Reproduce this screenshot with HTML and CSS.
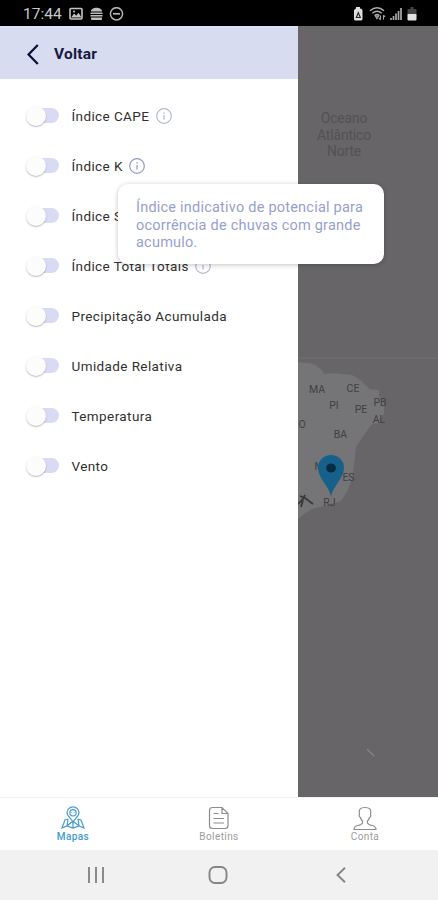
FILE: index.html
```html
<!DOCTYPE html>
<html lang="pt-BR">
<head>
<meta charset="utf-8">
<meta name="viewport" content="width=device-width, initial-scale=1">
<title>Mapas</title>
<link rel="stylesheet" href="styles.css">
</head>
<body>
<div class="phone">
  <header class="status">
    <span class="clock">17:44</span>
    <svg class="status-left" width="56" height="14" viewBox="0 0 56 14" fill="none">
      <rect x="1" y="1.5" width="12" height="10.5" rx="1" stroke="#c4c4c4" stroke-width="1.6"/>
      <path d="M2 10.5l3.2-4 2 2.3 2.3-3 3 4.7z" fill="#c4c4c4"/><circle cx="5" cy="4.5" r="1" fill="#c4c4c4"/>
      <path d="M22 4.500c0-5 11-5 11 0z M21.500 5.500h12v1.500h-12z M21.500 8h12v1.500h-12z M22 10.500h11v1.500q0 1-1 1h-9q-1 0-1-1z" fill="#bdbdbd"/>
      <circle cx="47.500" cy="6.800" r="6.100" stroke="#b4b4b4" stroke-width="1.500"/><path d="M44 6.800h7" stroke="#b4b4b4" stroke-width="1.700"/>
    </svg>
    <svg class="status-right" width="66" height="16" viewBox="0 0 66 16" fill="none">
      <path d="M2.500 4q0-1.500 1.500-1.500V1h4v1.500q2.500 0 2.500 2.500v8q0 1.500-1.500 1.500H3.500Q2 14.500 2 13V4z" fill="#dedede"/>
      <path d="M4.300 11.500l2-4.800 2 4.800z" stroke="#222" stroke-width="1.100"/>
      <path d="M18 4.800q7-6 14 0M20.300 7.300q4.700-4 9.400 0M22.600 9.600q2.400-2 4.800 0" stroke="#aaa" stroke-width="1.500"/>
      <path d="M23.500 10.200h3L25 12.700zM28.500 9.500v4M27 12l1.500 1.800M31.500 13.500v-4M31.500 9l1.500 2" stroke="#aaa" stroke-width="1.100"/>
      <path d="M39 14v-2M41.500 14v-4M44 14V7.500M46.500 14V5M49 14V2" stroke="#aaa" stroke-width="1.700"/>
      <path d="M55.500 8V4q0-1 1-1h2V1h3v2h2q1 0 1 1v4z" fill="#454545"/><path d="M55.500 8h9v5.500q0 1-1 1h-7q-1 0-1-1z" fill="#e2e2e2"/>
    </svg>
  </header>

  <main class="content">
    <section class="drawer">
      <div class="drawer-head">
        <svg width="12" height="21" viewBox="0 0 12 21" fill="none"><path d="M10.800 1L1.500 10.500l9.300 9.500" stroke="#0c1038" stroke-width="2.300"/></svg>
        <h1>Voltar</h1>
      </div>
      <ul class="layers">
        <li><i class="switch"></i><span>Índice CAPE</span><svg class="info faded" viewBox="0 0 16 16"><circle cx="8" cy="8" r="7.300"/><path d="M8 7v4.500M8 4.300v1.500"/></svg></li>
        <li><i class="switch"></i><span>Índice K</span><svg class="info" viewBox="0 0 16 16"><circle cx="8" cy="8" r="7.300"/><path d="M8 7v4.500M8 4.300v1.500"/></svg></li>
        <li><i class="switch"></i><span>Índice S</span></li>
        <li><i class="switch"></i><span>Índice Total Totals</span><svg class="info faded" viewBox="0 0 16 16"><circle cx="8" cy="8" r="7.300"/><path d="M8 7v4.500M8 4.300v1.500"/></svg></li>
        <li><i class="switch"></i><span>Precipitação Acumulada</span></li>
        <li><i class="switch"></i><span>Umidade Relativa</span></li>
        <li><i class="switch"></i><span>Temperatura</span></li>
        <li><i class="switch"></i><span>Vento</span></li>
      </ul>
    </section>

    <section class="map">
      <svg width="140" height="771" viewBox="298 26 140 771">
        <path d="M298 358H438" stroke="#747375"/>
        <path class="land" d="M298 362L306 363Q314 363 318 367L322 370 324 374 331 373 352 375Q359 378 363 383L370 389 379 390 379 396 384 402 384 413 379 423 372 424 366 432 356 447Q355 462 352 479L347 492 341 501 324 506 312 509 304 514 298 519z"/>
        <g class="ocean"><text x="344" y="123">Oceano</text><text x="344" y="139.500">Atlântico</text><text x="344" y="156">Norte</text></g>
        <g class="states">
          <text x="317" y="392.500">MA</text><text x="353" y="391.500">CE</text><text x="334" y="409">PI</text><text x="361" y="413">PE</text>
          <text x="380" y="405.500">PB</text><text x="379" y="423">AL</text><text x="302" y="428">O</text><text x="340.500" y="437.500">BA</text>
          <text x="319" y="469.500">M</text><text x="348.500" y="481">ES</text><text x="329.500" y="506">RJ</text>
        </g>
        <path d="M298 504l5-5 2-4M300 496l5 2 8 6M303 500l-2 7" stroke="#39393a" stroke-width="1.800" fill="none"/>
        <path d="M331 497C330 487 318 479 318 467.500a13 12.500 0 0 1 26 0C344 479 332 487 331 497z" fill="#15618a"/>
        <ellipse cx="331" cy="468" rx="4.900" ry="4.500" fill="#092b43"/>
        <path d="M367 749l7 7" stroke="#858486" stroke-width="1.300"/>
      </svg>
    </section>

    <div class="tooltip">Índice indicativo de potencial para<br>ocorrência de chuvas com grande<br>acumulo.</div>
  </main>

  <nav class="tabs">
    <a class="tab active">
      <svg width="24" height="24" viewBox="0 0 24 24"><path d="M12 16.500C11 13 6 10.500 6 6.800a6 6 0 0 1 12 0C18 10.500 13 13 12 16.500z"/><circle cx="12" cy="6.800" r="3.200"/><path d="M10.600 6.500v.5M13.400 6.500v.5M7 13l-3 1-3 8 5-2 6 2 6-2 5 2-3-8-3-1M7 13l-1 7M12 16.500V22M17 13l1 7M6 20l6-5 6 5"/></svg>
      <span>Mapas</span>
    </a>
    <a class="tab">
      <svg width="24" height="24" viewBox="0 0 24 24"><path d="M5.500 1.500h9.500l6 6v12q0 3-3 3H5.500q-3 0-3-3v-15q0-3 3-3zM15 1.500V7.500h6M6.500 7.500h5M6.500 12.500h10.500M6.500 17h10.500"/></svg>
      <span>Boletins</span>
    </a>
    <a class="tab">
      <svg width="24" height="24" viewBox="0 0 24 24"><path d="M6.500 8.500C5.500 3 7.500 1.500 12 1.500S18.500 3 17.500 8.500q1 2-1 3-.5 2-2 3.500v2q1 2 5 2.500 3.500 1 3.500 4H1q0-3 3.500-4 4-.5 5-2.500v-2q-1.500-1.500-2-3.500-2-1-1-3z"/></svg>
      <span>Conta</span>
    </a>
  </nav>

  <footer class="system">
    <svg width="18" height="16" viewBox="0 0 18 16"><path d="M2 0v16M9 0v16M16 0v16"/></svg>
    <svg class="home" width="20" height="18" viewBox="0 0 20 18"><rect x="1.500" y="1" width="17" height="16" rx="5.500"/></svg>
    <svg width="10" height="16" viewBox="0 0 10 16"><path d="M9 .800L1.500 8 9 15.200"/></svg>
  </footer>
</div>
</body>
</html>
```
FILE: styles.css
```css
* { box-sizing: border-box; }
body { margin: 0; font-family: Roboto, "Liberation Sans", sans-serif; background: #fff; }
.phone { width: 438px; height: 900px; display: flex; flex-direction: column; overflow: hidden; }

.status { height: 26px; flex: none; background: #000; display: flex; align-items: center; padding: 2px 20px 0 23px; }
.clock { color: #c8c8c8; font-size: 15.500px; line-height: 20px; width: 46px; letter-spacing: 0; }
.status-right { margin-left: auto; }

.content { position: relative; flex: 1; display: flex; min-height: 0; }
.drawer { width: 298px; background: #fff; }
.drawer-head { height: 53px; display: flex; align-items: center; gap: 15px; padding: 1px 27px 0; background: #d7dcf1; border-top: 2px solid #dcdff8; }
.drawer-head h1 { margin: 0; font-size: 15.500px; line-height: 18px; font-weight: 700; color: #17193f; letter-spacing: 0.2px; }

.layers { list-style: none; margin: 0; padding: 11.500px 0 0 26px; }
.layers li { height: 50px; display: flex; align-items: center; font-size: 13.500px; color: #303030; letter-spacing: 0.4px; white-space: nowrap; }
.switch { position: relative; width: 33px; height: 22px; margin-right: 12.500px; display: flex; align-items: center; }
.switch::before { content: ""; position: absolute; right: 0; top: 3.500px; width: 27px; height: 14.500px; border-radius: 8px; background: #d8dbf3; }
.switch::after { content: ""; position: relative; width: 20px; height: 20px; border-radius: 50%; background: #fcfcfb; box-shadow: 0 1px 1.500px rgba(0, 0, 0, 0.27); }
.info { width: 16px; height: 16px; margin-left: 6.500px; fill: none; stroke: #8e9bc8; stroke-width: 1.200; }
.info.faded { stroke: #b3b9cf; }

.map { width: 140px; background: #676568; }
.map svg { display: block; }
.land { fill: #757476; }
.ocean { font-size: 13.800px; text-anchor: middle; fill: #525154; letter-spacing: -0.100px; }
.states { font-size: 10.500px; text-anchor: middle; fill: #414042; }

.tooltip { position: absolute; left: 118px; top: 158px; width: 266px; height: 80px; padding: 15px 18px; border-radius: 10px; background: #fff; box-shadow: 0 1px 5px rgba(0, 0, 0, 0.24); color: #979fce; font-size: 14.500px; line-height: 17.500px; letter-spacing: 0.220px; white-space: nowrap; }

.tabs { height: 53px; flex: none; background: #fff; display: grid; grid-template-columns: repeat(3, 146px); border-top: 1px solid #f2f2f2; }
.tab { display: flex; flex-direction: column; align-items: center; padding-top: 8px; font-size: 10px; line-height: 13px; color: #9b9b9b; letter-spacing: 0.4px; }
.tab svg { fill: none; stroke: #8d8d8d; stroke-width: 1.200; }
.tab.active { color: #3f9bd2; font-weight: 500; }
.tab.active svg { stroke: #4a9bd0; }

.system { height: 50px; flex: none; background: #f1f1f1; display: flex; align-items: center; justify-content: space-between; padding: 0 92px 0 87px; }
.system svg { fill: none; stroke: #858585; stroke-width: 1.900; }
.system .home { margin-right: 5px; }
```
